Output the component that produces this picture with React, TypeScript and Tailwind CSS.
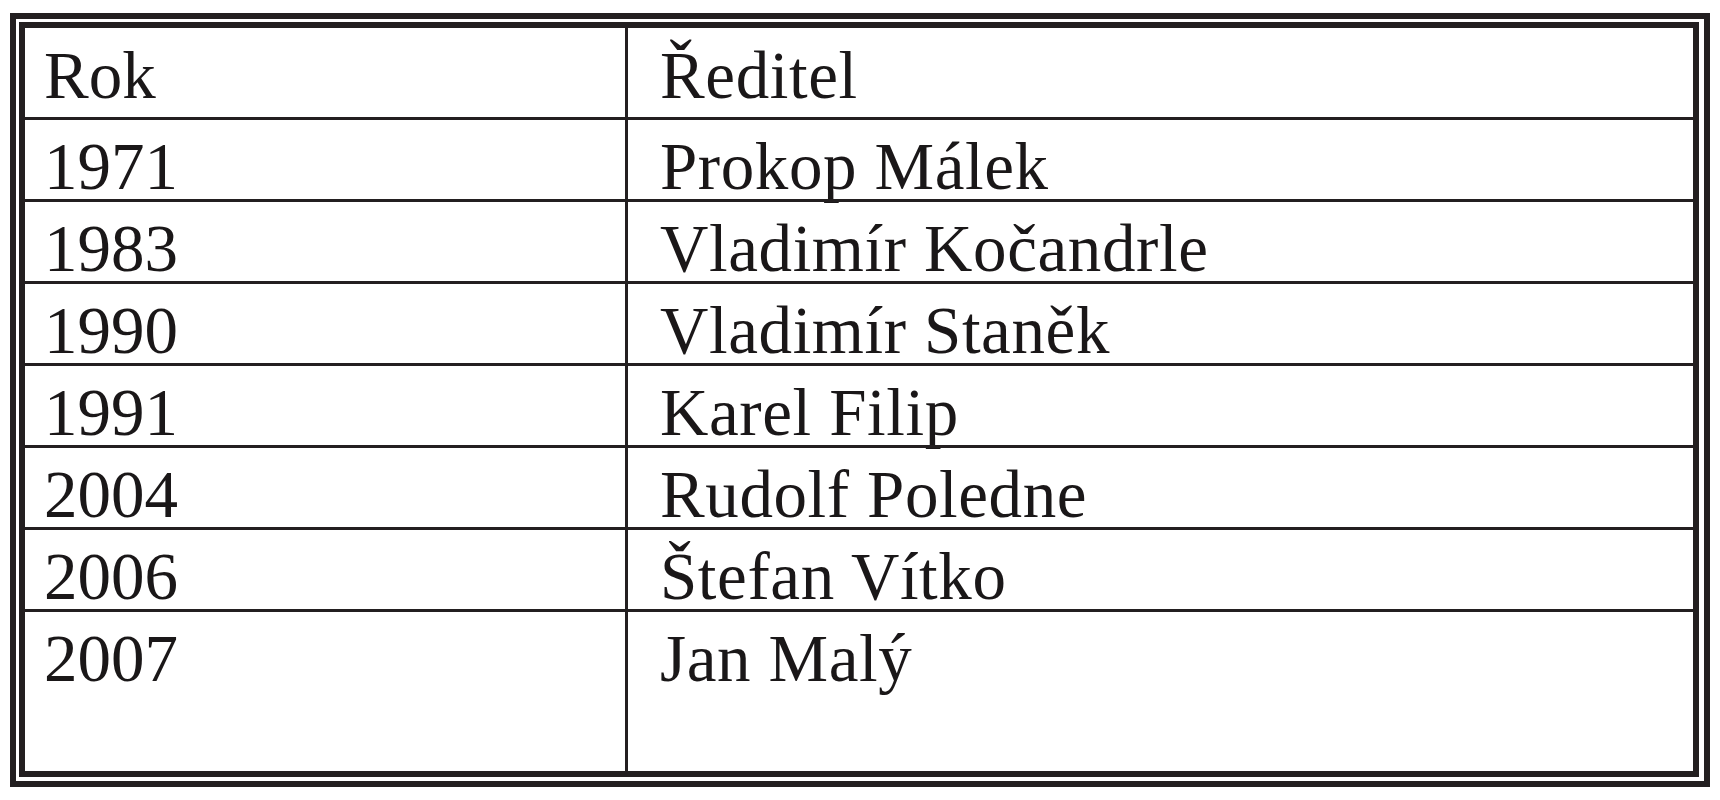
import React from 'react';

const rows: [string, string][] = [
  ['1971', 'Prokop Málek'],
  ['1983', 'Vladimír Kočandrle'],
  ['1990', 'Vladimír Staněk'],
  ['1991', 'Karel Filip'],
  ['2004', 'Rudolf Poledne'],
  ['2006', 'Štefan Vítko'],
  ['2007', 'Jan Malý'],
];

function Row({ year, name, last }: { year: string; name: string; last?: boolean }) {
  return (
    <div className={`flex border-t-[3px] border-[#231f20] ${last ? 'flex-1' : 'h-[82px]'}`}>
      <div className="w-[603px] shrink-0 border-r-[3px] border-[#231f20] pl-[19px] pt-[13px]">{year}</div>
      <div className="flex-1 pl-[32px] pt-[13px] tracking-[0.6px]">{name}</div>
    </div>
  );
}

export default function App() {
  return (
    <div
      className="h-[800px] w-[1720px] bg-white pl-[10px] pt-[13px] text-[67px] leading-none text-[#1a1718]"
      style={{ fontFamily: '"Liberation Serif", "Times New Roman", serif' }}
    >
      <div className="h-[774px] w-[1700px] border-[6px] border-[#231f20] pb-[4px] pl-[3px] pr-[5px] pt-[3px]">
        <div className="flex h-full flex-col border-[6px] border-[#231f20]">
          <div className="flex h-[89px]">
            <div className="w-[603px] shrink-0 border-r-[3px] border-[#231f20] pl-[19px] pt-[14px]">Rok</div>
            <div className="flex-1 pl-[32px] pt-[14px] tracking-[0.6px]">Ředitel</div>
          </div>
          {rows.map(([year, name], i) => (
            <Row key={year} year={year} name={name} last={i === rows.length - 1} />
          ))}
        </div>
      </div>
    </div>
  );
}
